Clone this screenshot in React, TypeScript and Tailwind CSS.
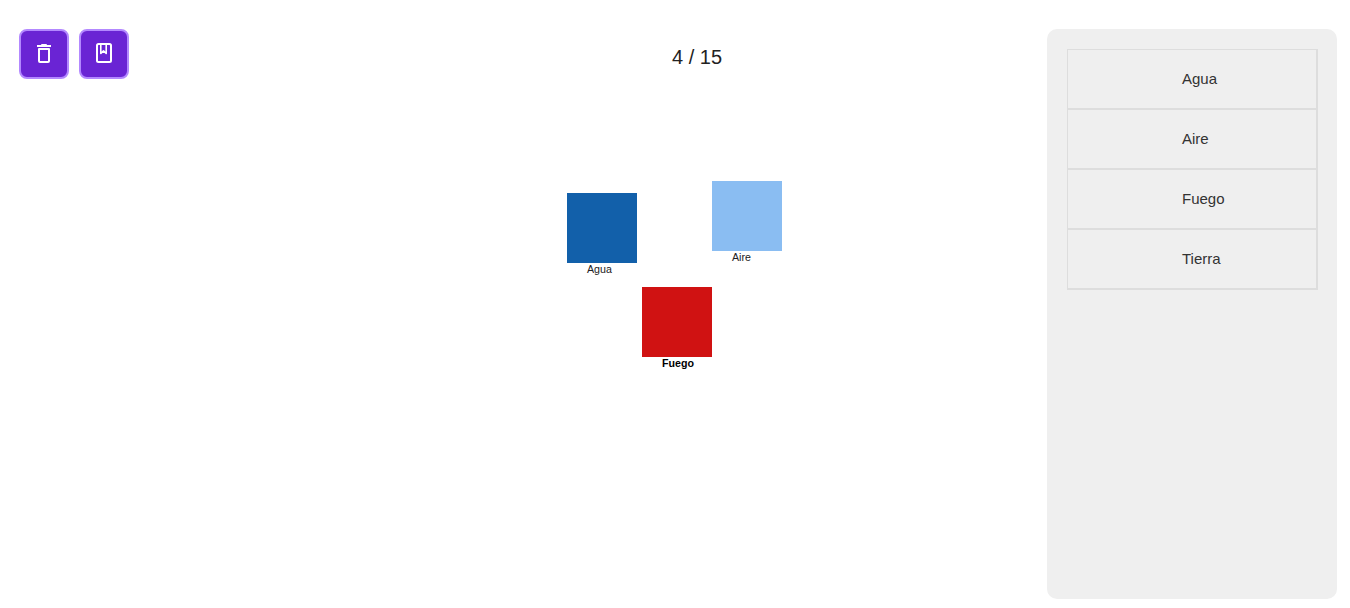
const blocks = [
  { name: "Agua", color: "bg-[#1260aa]", left: "left-[567px]", top: "top-[193px]", bold: false },
  { name: "Aire", color: "bg-[#8abdf2]", left: "left-[712px]", top: "top-[181px]", bold: false },
  { name: "Fuego", color: "bg-[#d01212]", left: "left-[642px]", top: "top-[287px]", bold: true },
];

const items = ["Agua", "Aire", "Fuego", "Tierra"];

function TrashIcon() {
  return (
    <svg width="24" height="24" viewBox="0 0 24 24" fill="none" stroke="currentColor" strokeWidth="2" strokeLinejoin="round">
      <path d="M5 4h14" />
      <path d="M9.5 3.5V2.5h5v1" strokeWidth="1" />
      <path d="M7 7h10v12a1 1 0 0 1-1 1H8a1 1 0 0 1-1-1z" />
    </svg>
  );
}

function BookIcon() {
  return (
    <svg width="24" height="24" viewBox="0 0 24 24" fill="none" stroke="currentColor" strokeWidth="2" strokeLinejoin="round">
      <rect x="5" y="2" width="14" height="18" rx="1.5" />
      <path d="M8.8 2v9.5l2.7-2.6 2.7 2.6V2" strokeWidth="1.6" />
    </svg>
  );
}

export default function App() {
  return (
    <div className="relative flex h-[608px] w-[1350px] justify-between overflow-hidden bg-white font-['Liberation_Sans',Arial,sans-serif] text-[#222]">
      <div className="flex-1">
        <div className="flex gap-2.5 pl-[19px] pt-[29px]">
          <button className="flex h-[50px] w-[50px] items-center justify-center rounded-lg border-2 border-[#b388ff] bg-[#6a24d4] text-white">
            <TrashIcon />
          </button>
          <button className="flex h-[50px] w-[50px] items-center justify-center rounded-lg border-2 border-[#b388ff] bg-[#6a24d4] text-white">
            <BookIcon />
          </button>
        </div>
      </div>

      <p className="absolute left-[672px] top-[45px] text-xl leading-6">4 / 15</p>

      {blocks.map((b) => (
        <div key={b.name} className={`absolute w-[70px] ${b.left} ${b.top}`}>
          <div className={`h-[70px] w-[70px] ${b.color}`} />
          <p className={`pl-5 text-[10.67px] leading-3 ${b.bold ? "font-bold text-black" : "text-[#222]"}`}>{b.name}</p>
        </div>
      ))}

      <aside className="mb-[9px] mr-[13px] mt-[29px] w-[290px] rounded-[10px] bg-[#efefef] pl-5 pt-5">
        <ul className="w-[251px] border-b border-r border-[#dddddd]">
          {items.map((item) => (
            <li key={item} className="flex h-[60px] items-center border border-[#dddddd] pl-[114px] text-[15px] text-[#333]">
              {item}
            </li>
          ))}
        </ul>
      </aside>
    </div>
  );
}
